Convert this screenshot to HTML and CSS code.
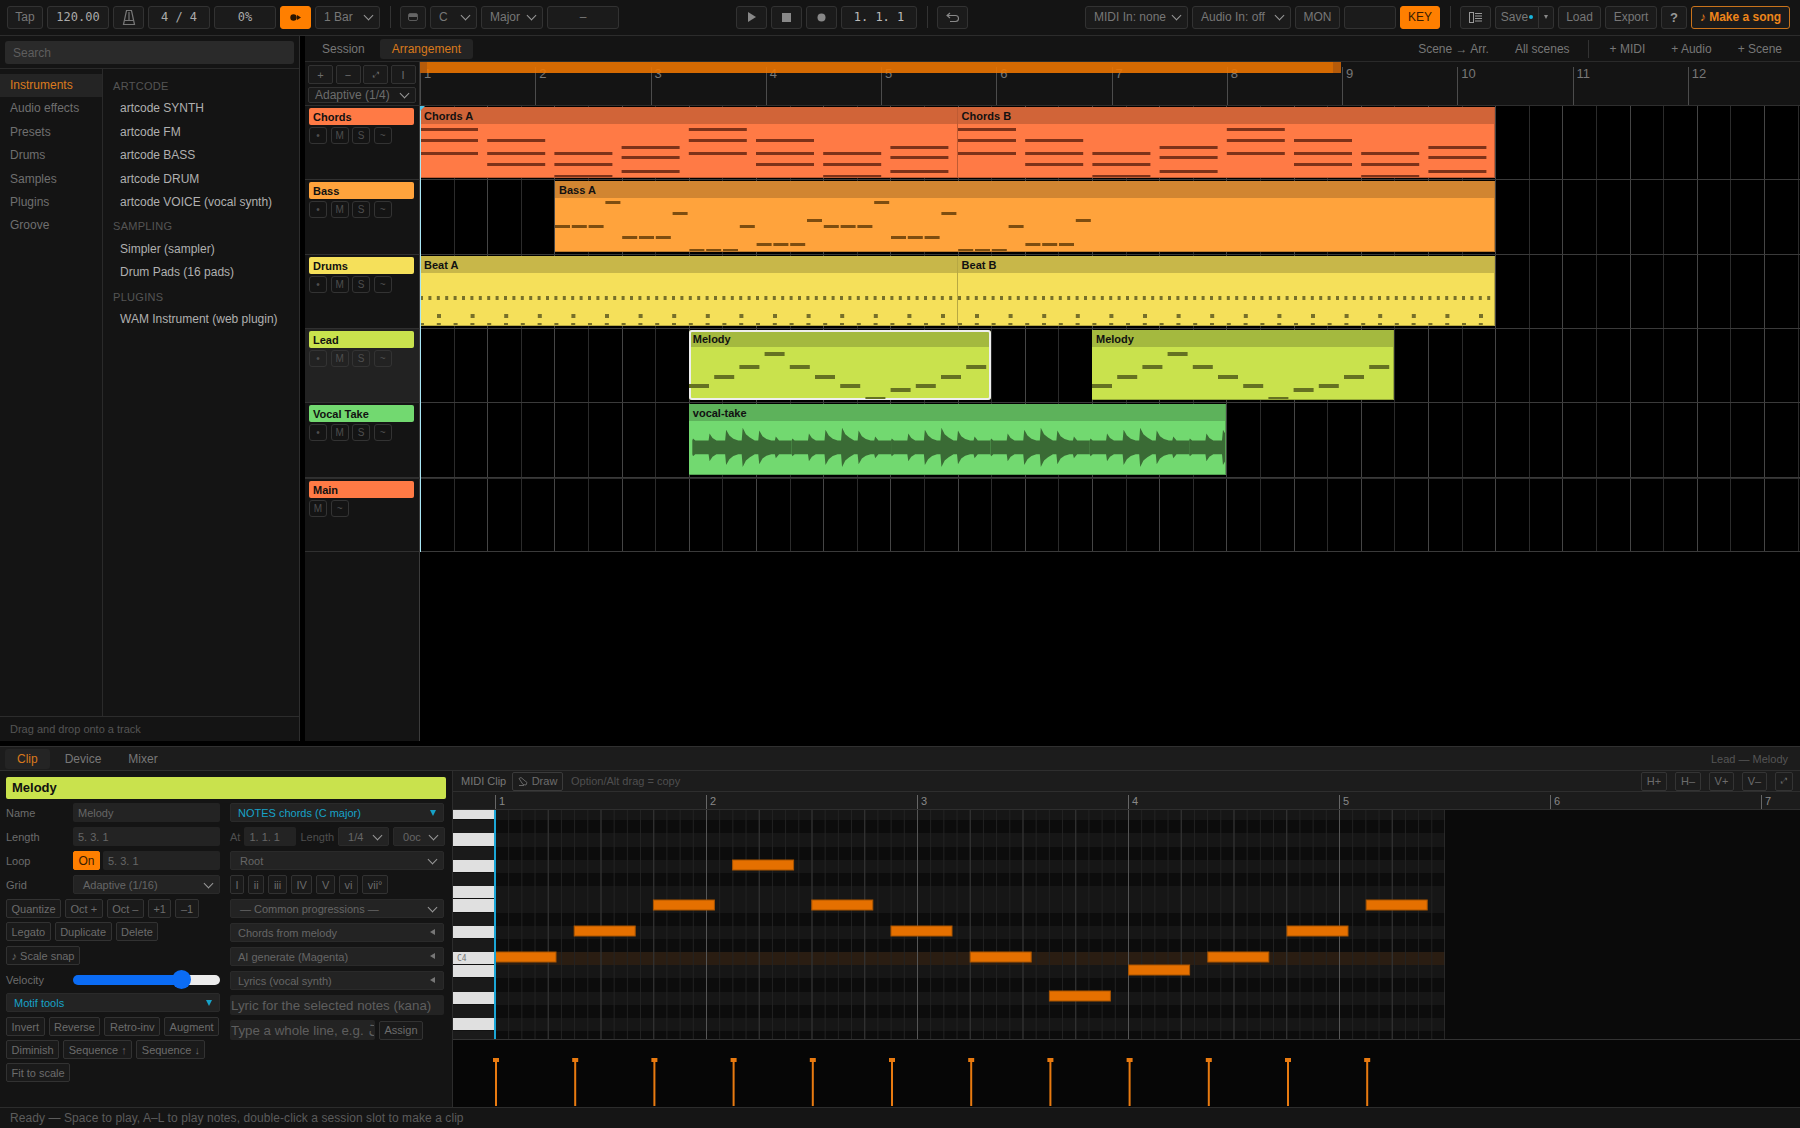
FILE: index.html
```html
<!DOCTYPE html>
<html lang="en">
<head>
    <meta charset="UTF-8">
    <title>artcode DAW</title>
    <link rel="stylesheet" href="styles.css">
</head>
<body>
    <!-- shared note shapes for clips -->
    <svg class="defs" aria-hidden="true">
        <defs>
            <g id="chords-half">
                <rect x="0" y="21" width="58" height="3"/><rect x="0" y="32" width="58" height="3"/><rect x="0" y="45" width="58" height="3"/>
                <rect x="67.2" y="32" width="58" height="3"/><rect x="67.2" y="45" width="58" height="3"/><rect x="67.2" y="56" width="58" height="3"/>
                <rect x="134.4" y="45" width="58" height="3"/><rect x="134.4" y="56" width="58" height="3"/><rect x="134.4" y="68" width="58" height="3"/>
                <rect x="201.6" y="39" width="58" height="3"/><rect x="201.6" y="49" width="58" height="3"/><rect x="201.6" y="63" width="58" height="3"/>
            </g>
            <g id="chords-clip"><use href="#chords-half"/><use href="#chords-half" x="268.8"/></g>
            <g id="bass-half">
                <rect x="0" y="44" width="15" height="3"/><rect x="16.8" y="44" width="15" height="3"/><rect x="33.6" y="44" width="15" height="3"/>
                <rect x="50.4" y="20" width="15" height="3"/>
                <rect x="67.2" y="55" width="15" height="3"/><rect x="84" y="55" width="15" height="3"/><rect x="100.8" y="55" width="15" height="3"/>
                <rect x="117.6" y="31" width="15" height="3"/>
                <rect x="134.4" y="68" width="15" height="3"/><rect x="151.2" y="68" width="15" height="3"/><rect x="168" y="68" width="15" height="3"/>
                <rect x="184.8" y="44" width="15" height="3"/>
                <rect x="201.6" y="62" width="15" height="3"/><rect x="218.4" y="62" width="15" height="3"/><rect x="235.2" y="62" width="15" height="3"/>
                <rect x="252" y="38" width="15" height="3"/>
            </g>
            <g id="melody-clip">
                <rect x="0" y="54" width="20" height="4"/><rect x="25.2" y="45" width="20" height="4"/><rect x="50.4" y="35" width="20" height="4"/>
                <rect x="75.6" y="22" width="20" height="4"/><rect x="100.8" y="35" width="20" height="4"/><rect x="126" y="45" width="20" height="4"/>
                <rect x="151.2" y="54" width="20" height="4"/><rect x="176.4" y="67" width="20" height="4"/><rect x="201.6" y="58" width="20" height="4"/>
                <rect x="226.8" y="54" width="20" height="4"/><rect x="252" y="45" width="20" height="4"/><rect x="277.2" y="35" width="20" height="4"/>
            </g>
            <g id="drum-bar">
                <rect x="0" y="40" width="3" height="4"/><rect x="8.4" y="40" width="3" height="4"/><rect x="16.8" y="40" width="3" height="4"/><rect x="25.2" y="40" width="3" height="4"/>
                <rect x="33.6" y="40" width="3" height="4"/><rect x="42" y="40" width="3" height="4"/><rect x="50.4" y="40" width="3" height="4"/><rect x="58.8" y="40" width="3" height="4"/>
                <rect x="17" y="58" width="4" height="4"/><rect x="50.6" y="58" width="4" height="4"/>
                <rect x="0" y="67" width="4" height="4"/><rect x="16.8" y="67" width="4" height="4"/><rect x="33.6" y="67" width="4" height="4"/><rect x="50.4" y="67" width="4" height="4"/>
            </g>
            <g id="drum-clip">
                <use href="#drum-bar"/><use href="#drum-bar" x="67.2"/><use href="#drum-bar" x="134.4"/><use href="#drum-bar" x="201.6"/>
                <use href="#drum-bar" x="268.8"/><use href="#drum-bar" x="336"/><use href="#drum-bar" x="403.2"/><use href="#drum-bar" x="470.4"/>
            </g>
            <path id="wave-period" d="M0,37 L0.7,35 L3,37 L16.5,37 L17.5,30 L20.5,34.5 L24.5,37 L33.3,37 L34.3,26 L37.6,32 L41.6,35.2 L46.6,37 L50.1,37 L51.1,24 L54.4,30.6 L58.4,34 L63.4,37 L66.9,37 L67.9,27 L71.2,32.6 L75.2,35.6 L80.2,37 L83.7,37 L84.7,33 L88,37 L100.8,37 L100.8,51 L88,51 L84.7,55 L83.7,51 L80.2,51 L75.2,52.4 L71.2,55.4 L67.9,61 L66.9,51 L63.4,51 L58.4,54 L54.4,57.4 L51.1,64 L50.1,51 L46.6,51 L41.6,52.8 L37.6,56 L34.3,62 L33.3,51 L24.5,51 L20.5,53.5 L17.5,58 L16.5,51 L3,51 L0.7,53 L0,51 Z"/>
            <g id="vel-stem"><rect x="0" y="18" width="6" height="4"/><rect x="2" y="18" width="2" height="48"/></g>
        </defs>
    </svg>

    <header class="topbar">
        <div class="btn w-tap">Tap</div>
        <div class="btn mono w-num">120.00</div>
        <div class="btn w-icon">
            <svg width="14" height="17" viewBox="0 0 14 17" fill="none" stroke="#777" stroke-width="1.2"><path d="M4.5 1.5h5l3 14h-11z"/><path d="M2.5 11.5h9M7 11.5V3"/></svg>
        </div>
        <div class="btn mono w-num">4 / 4</div>
        <div class="btn mono w-num">0%</div>
        <div class="btn btn-on w-icon">
            <svg width="11" height="7" viewBox="0 0 11 7" fill="#2a1500"><circle cx="3.5" cy="3.5" r="3.2"/><path d="M7 1L11 3.5 7 6z"/></svg>
        </div>
        <div class="btn sel w-bar">1 Bar</div>
        <div class="sep"></div>
        <div class="btn w-keys">
            <svg width="10" height="8" viewBox="0 0 10 8"><rect x="0.5" y="0.5" width="9" height="7" rx="1.5" fill="none" stroke="#5a5a5a"/><rect x="1" y="1" width="8" height="3" fill="#666"/></svg>
        </div>
        <div class="btn sel w-root">C</div>
        <div class="btn sel w-num">Major</div>
        <div class="btn w-chord">–</div>

        <div class="btn w-icon push">
            <svg width="10" height="12" viewBox="0 0 10 12" fill="#888"><path d="M1 1l8 5-8 5z"/></svg>
        </div>
        <div class="btn w-icon">
            <svg width="9" height="9" viewBox="0 0 9 9" fill="#888"><rect width="9" height="9"/></svg>
        </div>
        <div class="btn w-icon">
            <svg width="9" height="9" viewBox="0 0 9 9" fill="#888"><circle cx="4.5" cy="4.5" r="4"/></svg>
        </div>
        <div class="btn mono bright w-pos">1. 1. 1</div>
        <div class="sep"></div>
        <div class="btn w-icon">
            <svg width="14" height="11" viewBox="0 0 14 11" fill="none" stroke="#888" stroke-width="1.1"><path d="M4 1L1 3.5 4 6M1 3.5h8.5a3 3 0 0 1 0 6H4"/></svg>
        </div>

        <div class="btn sel w-midi push">MIDI In: none</div>
        <div class="btn sel w-audio">Audio In: off</div>
        <div class="btn w-mon">MON</div>
        <div class="btn w-blank"></div>
        <div class="btn btn-on w-key">KEY</div>
        <div class="sep"></div>
        <div class="btn w-icon">
            <svg width="13" height="11" viewBox="0 0 13 11" fill="none" stroke="#999"><rect x="0.5" y="0.5" width="4" height="10"/><path d="M6 1.5h7M6 4h7M6 6.5h7M6 9h7"/></svg>
        </div>
        <div class="split">
            <div class="btn w-save">Save<span class="dirty"></span></div>
            <div class="btn w-caret"><span class="tri-down"></span></div>
        </div>
        <div class="btn w-load">Load</div>
        <div class="btn w-export">Export</div>
        <div class="btn w-help">?</div>
        <div class="btn btn-song w-song">♪ Make a song</div>
    </header>

    <main class="workspace">
        <aside class="browser">
            <div class="browser-search"><input class="search" placeholder="Search"></div>
            <div class="browser-body">
                <nav class="cats">
                    <div class="cat active">Instruments</div>
                    <div class="cat">Audio effects</div>
                    <div class="cat">Presets</div>
                    <div class="cat">Drums</div>
                    <div class="cat">Samples</div>
                    <div class="cat">Plugins</div>
                    <div class="cat">Groove</div>
                </nav>
                <div class="items">
                    <div class="group">ARTCODE</div>
                    <div class="item">artcode SYNTH</div>
                    <div class="item">artcode FM</div>
                    <div class="item">artcode BASS</div>
                    <div class="item">artcode DRUM</div>
                    <div class="item">artcode VOICE (vocal synth)</div>
                    <div class="group">SAMPLING</div>
                    <div class="item">Simpler (sampler)</div>
                    <div class="item">Drum Pads (16 pads)</div>
                    <div class="group">PLUGINS</div>
                    <div class="item">WAM Instrument (web plugin)</div>
                </div>
            </div>
            <div class="browser-foot">Drag and drop onto a track</div>
        </aside>

        <section class="arrange">
            <div class="arrange-tabs">
                <div class="tab">Session</div>
                <div class="tab active">Arrangement</div>
                <div class="arrange-actions">
                    <div class="action">Scene → Arr.</div>
                    <div class="action">All scenes</div>
                    <div class="action-sep"></div>
                    <div class="action">+ MIDI</div>
                    <div class="action">+ Audio</div>
                    <div class="action">+ Scene</div>
                </div>
            </div>

            <div class="ruler-row">
                <div class="ruler-tools">
                    <div class="zoom-btns">
                        <div class="tool wide">+</div>
                        <div class="tool wide">−</div>
                        <div class="tool wide small">⤢</div>
                        <div class="tool wide">I</div>
                    </div>
                    <div class="tool sel snap-sel">Adaptive (1/4)</div>
                </div>
                <div class="ruler">
                    <div class="bar">1</div><div class="bar">2</div><div class="bar">3</div><div class="bar">4</div>
                    <div class="bar">5</div><div class="bar">6</div><div class="bar">7</div><div class="bar">8</div>
                    <div class="bar">9</div><div class="bar">10</div><div class="bar">11</div><div class="bar">12</div>
                    <div class="loop"></div>
                </div>
            </div>

            <div class="tracks">
                <div class="track">
                    <div class="head">
                        <div class="track-name c-chords">Chords</div>
                        <div class="track-btns"><div class="mini">•</div><div class="mini">M</div><div class="mini">S</div><div class="mini">~</div></div>
                    </div>
                    <div class="lane">
                        <div class="clip c-chords chords-a"><div class="clip-name">Chords A</div><svg class="clip-notes n-chords"><use href="#chords-clip"/></svg></div>
                        <div class="clip c-chords chords-b"><div class="clip-name">Chords B</div><svg class="clip-notes n-chords"><use href="#chords-clip"/></svg></div>
                    </div>
                </div>
                <div class="track">
                    <div class="head">
                        <div class="track-name c-bass">Bass</div>
                        <div class="track-btns"><div class="mini">•</div><div class="mini">M</div><div class="mini">S</div><div class="mini">~</div></div>
                    </div>
                    <div class="lane">
                        <div class="clip c-bass bass-a"><div class="clip-name">Bass A</div><svg class="clip-notes n-bass"><use href="#bass-half"/><use href="#bass-half" x="268.8"/></svg></div>
                    </div>
                </div>
                <div class="track">
                    <div class="head">
                        <div class="track-name c-drums">Drums</div>
                        <div class="track-btns"><div class="mini">•</div><div class="mini">M</div><div class="mini">S</div><div class="mini">~</div></div>
                    </div>
                    <div class="lane">
                        <div class="clip c-drums chords-a"><div class="clip-name">Beat A</div><svg class="clip-notes n-drums"><use href="#drum-clip"/></svg></div>
                        <div class="clip c-drums chords-b"><div class="clip-name">Beat B</div><svg class="clip-notes n-drums"><use href="#drum-clip"/></svg></div>
                    </div>
                </div>
                <div class="track selected">
                    <div class="head">
                        <div class="track-name c-lead">Lead</div>
                        <div class="track-btns"><div class="mini">•</div><div class="mini">M</div><div class="mini">S</div><div class="mini">~</div></div>
                    </div>
                    <div class="lane">
                        <div class="clip c-lead melody-a picked"><div class="clip-name">Melody</div><svg class="clip-notes n-lead"><use href="#melody-clip"/></svg></div>
                        <div class="clip c-lead melody-b"><div class="clip-name">Melody</div><svg class="clip-notes n-lead"><use href="#melody-clip"/></svg></div>
                    </div>
                </div>
                <div class="track">
                    <div class="head">
                        <div class="track-name c-vocal">Vocal Take</div>
                        <div class="track-btns"><div class="mini">•</div><div class="mini">M</div><div class="mini">S</div><div class="mini">~</div></div>
                    </div>
                    <div class="lane">
                        <div class="clip c-vocal vocal"><div class="clip-name">vocal-take</div>
                            <svg class="clip-notes" viewBox="0 0 537.6 70.5">
                                <g fill="#3a6b35">
                                    <use href="#wave-period"/><use href="#wave-period" x="100.8"/><use href="#wave-period" x="201.6"/>
                                    <use href="#wave-period" x="302.4"/><use href="#wave-period" x="403.2"/><use href="#wave-period" x="504"/>
                                </g>
                            </svg>
                        </div>
                    </div>
                </div>
                <div class="track track-main">
                    <div class="head">
                        <div class="track-name c-chords">Main</div>
                        <div class="track-btns"><div class="mini">M</div><div class="mini">~</div></div>
                    </div>
                    <div class="lane"></div>
                </div>
                <div class="track-rest"><div class="head"></div></div>
                <div class="playhead"></div>
            </div>
        </section>
    </main>

    <section class="detail">
        <div class="detail-tabs">
            <div class="tab active">Clip</div>
            <div class="tab">Device</div>
            <div class="tab">Mixer</div>
            <div class="detail-title">Lead — Melody</div>
        </div>
        <div class="detail-body">
            <div class="clip-panel">
                <div class="clip-title">Melody</div>
                <div class="clip-cols">
                    <div class="col">
                        <div class="field"><label>Name</label><input class="txt" value="Melody"></div>
                        <div class="field"><label>Length</label><input class="txt" value="5. 3. 1"></div>
                        <div class="field"><label>Loop</label><div class="tool tool-on">On</div><input class="txt" value="5. 3. 1"></div>
                        <div class="field"><label>Grid</label><div class="drop sel indent">Adaptive (1/16)</div></div>
                        <div class="tools">
                            <div class="tool-row"><div class="tool">Quantize</div><div class="tool">Oct +</div><div class="tool">Oct –</div><div class="tool">+1</div><div class="tool">–1</div></div>
                            <div class="tool-row"><div class="tool">Legato</div><div class="tool">Duplicate</div><div class="tool">Delete</div></div>
                        </div>
                        <div class="tool-row"><div class="tool">♪ Scale snap</div></div>
                        <div class="field vel-field"><label>Velocity</label><input class="velocity" type="range" min="0" max="100" value="77"></div>
                        <div class="drop fold-open">Motif tools</div>
                        <div class="tools">
                            <div class="tool-row"><div class="tool">Invert</div><div class="tool">Reverse</div><div class="tool">Retro-inv</div><div class="tool">Augment</div></div>
                            <div class="tool-row"><div class="tool">Diminish</div><div class="tool">Sequence ↑</div><div class="tool">Sequence ↓</div></div>
                            <div class="tool-row"><div class="tool">Fit to scale</div></div>
                        </div>
                    </div>
                    <div class="col">
                        <div class="drop fold-open">NOTES chords (C major)</div>
                        <div class="at-row">
                            <span class="at-label">At</span><input class="txt at-pos" value="1. 1. 1">
                            <span class="at-label">Length</span><div class="drop sel at-len">1/4</div><div class="drop sel at-oct">0oc</div>
                        </div>
                        <div class="drop sel indent-root">Root</div>
                        <div class="tool-row numerals"><div class="tool">I</div><div class="tool">ii</div><div class="tool">iii</div><div class="tool">IV</div><div class="tool">V</div><div class="tool">vi</div><div class="tool">vii°</div></div>
                        <div class="drop sel indent">— Common progressions —</div>
                        <div class="drop fold">Chords from melody</div>
                        <div class="drop fold">AI generate (Magenta)</div>
                        <div class="drop fold">Lyrics (vocal synth)</div>
                        <input class="lyric" placeholder="Lyric for the selected notes (kana)">
                        <div class="assign-row"><input class="lyric line" placeholder="Type a whole line, e.g. こんにちは"><div class="tool">Assign</div></div>
                    </div>
                </div>
            </div>

            <div class="roll">
                <div class="roll-head">
                    <span class="roll-title">MIDI Clip</span>
                    <div class="tool draw">
                        <svg width="10" height="9" viewBox="0 0 10 9" fill="none" stroke="#666"><path d="M1 1.5l2-1 6 5-1 2.5-3-.5zM1 8.5h5"/></svg>
                        Draw
                    </div>
                    <span class="roll-hint">Option/Alt drag = copy</span>
                    <div class="roll-zoom">
                        <div class="tool zoom-h">H+</div><div class="tool zoom-h">H–</div><div class="tool zoom-v">V+</div><div class="tool zoom-v">V–</div><div class="tool zoom-fit small">⤢</div>
                    </div>
                </div>
                <div class="roll-ruler">
                    <div class="roll-bar">1</div><div class="roll-bar">2</div><div class="roll-bar">3</div><div class="roll-bar">4</div>
                    <div class="roll-bar">5</div><div class="roll-bar">6</div><div class="roll-bar">7</div>
                </div>
                <div class="roll-grid">
                    <div class="rows">
                        <div class="row"><div class="key white"></div><div class="keyrow light"></div></div>
                        <div class="row"><div class="key black"></div><div class="keyrow"></div></div>
                        <div class="row"><div class="key white"></div><div class="keyrow light"></div></div>
                        <div class="row"><div class="key black"></div><div class="keyrow"></div></div>
                        <div class="row"><div class="key white"></div><div class="keyrow light"></div></div>
                        <div class="row"><div class="key black"></div><div class="keyrow"></div></div>
                        <div class="row"><div class="key white"></div><div class="keyrow light"></div></div>
                        <div class="row"><div class="key white"></div><div class="keyrow light"></div></div>
                        <div class="row"><div class="key black"></div><div class="keyrow"></div></div>
                        <div class="row"><div class="key white"></div><div class="keyrow light"></div></div>
                        <div class="row"><div class="key black"></div><div class="keyrow"></div></div>
                        <div class="row"><div class="key white">C4</div><div class="keyrow root"></div></div>
                        <div class="row"><div class="key white"></div><div class="keyrow light"></div></div>
                        <div class="row"><div class="key black"></div><div class="keyrow"></div></div>
                        <div class="row"><div class="key white"></div><div class="keyrow light"></div></div>
                        <div class="row"><div class="key black"></div><div class="keyrow"></div></div>
                        <div class="row"><div class="key white"></div><div class="keyrow light"></div></div>
                        <div class="row"><div class="key black"></div><div class="keyrow"></div></div>
                    </div>
                    <div class="roll-lines"></div>
                    <svg class="roll-notes">
                        <rect x="0" y="142" width="61" height="10"/><rect x="79.2" y="116" width="61" height="10"/><rect x="158.4" y="90" width="61" height="10"/>
                        <rect x="237.6" y="50" width="61" height="10"/><rect x="316.8" y="90" width="61" height="10"/><rect x="396" y="116" width="61" height="10"/>
                        <rect x="475.2" y="142" width="61" height="10"/><rect x="554.4" y="181" width="61" height="10"/><rect x="633.6" y="155" width="61" height="10"/>
                        <rect x="712.8" y="142" width="61" height="10"/><rect x="792" y="116" width="61" height="10"/><rect x="871.2" y="90" width="61" height="10"/>
                    </svg>
                    <div class="roll-playhead"></div>
                </div>
                <div class="vel-lane">
                    <svg class="vel-stems">
                        <use href="#vel-stem" x="40"/><use href="#vel-stem" x="119.2"/><use href="#vel-stem" x="198.4"/><use href="#vel-stem" x="277.6"/>
                        <use href="#vel-stem" x="356.8"/><use href="#vel-stem" x="436"/><use href="#vel-stem" x="515.2"/><use href="#vel-stem" x="594.4"/>
                        <use href="#vel-stem" x="673.6"/><use href="#vel-stem" x="752.8"/><use href="#vel-stem" x="832"/><use href="#vel-stem" x="911.2"/>
                    </svg>
                </div>
            </div>
        </div>
    </section>

    <footer class="status">Ready — Space to play, A–L to play notes, double-click a session slot to make a clip</footer>
</body>
</html>
```

FILE: styles.css
```css
* {
    box-sizing: border-box;
}

html, body {
    margin: 0;
    height: 100%;
}

body {
    width: 1800px;
    height: 1128px;
    display: flex;
    flex-direction: column;
    overflow: hidden;
    background-color: #000;
    color: #777;
    font-family: "Liberation Sans", "Noto Sans CJK JP", sans-serif;
    font-size: 12px;
}

input {
    font-family: inherit;
    outline: none;
    border: none;
}

.defs {
    position: absolute;
    width: 0;
    height: 0;
}

/* top bar */
.topbar {
    flex: none;
    height: 36px;
    display: flex;
    align-items: center;
    gap: 4px;
    padding: 0 0 1px 7px;
    background-color: #141414;
    border-bottom: 1px solid #2c2c2c;
}

.btn {
    flex: none;
    height: 23px;
    display: flex;
    align-items: center;
    justify-content: center;
    background-color: #1b1b1b;
    border: 1px solid #323232;
    border-radius: 3px;
    color: #777;
    white-space: nowrap;
}

.mono {
    font-family: "DejaVu Sans Mono", monospace;
    font-size: 12px;
    color: #aaa;
}

.bright {
    color: #bbb;
}

.btn-on {
    background-color: #ff7f00;
    border-color: #ff7f00;
    color: #3a1c00;
}

.btn-song {
    background-color: #1b1b1b;
    border-color: #c9731c;
    color: #ee851a;
    font-weight: bold;
}

.sel {
    position: relative;
    justify-content: flex-start;
    padding-left: 8px;
}

.sel::after {
    content: "";
    position: absolute;
    right: 7px;
    top: 50%;
    width: 6px;
    height: 6px;
    margin-top: -5px;
    border-right: 1.2px solid #999;
    border-bottom: 1.2px solid #999;
    transform: rotate(45deg);
}

.w-tap { width: 36px; }
.w-num { width: 62px; }
.w-icon { width: 31px; }
.w-bar { width: 65px; }
.w-keys { width: 26px; }
.w-root { width: 47px; }
.w-chord { width: 72px; }
.w-pos { width: 76px; }
.w-midi { width: 103px; }
.w-audio { width: 99px; }
.w-mon { width: 45px; }
.w-blank { width: 52px; }
.w-key { width: 40px; }
.w-save { width: 43px; border-radius: 3px 0 0 3px; border-right: none; }
.w-caret { width: 16px; border-radius: 0 3px 3px 0; }
.w-load { width: 43px; }
.w-export { width: 52px; }
.w-help { width: 26px; font-weight: bold; font-size: 13px; color: #999; }
.w-song { width: 99px; }

.push {
    margin-left: 113px;
}

.sep {
    flex: none;
    width: 1px;
    height: 22px;
    margin: 0 5px 0 6px;
    background-color: #333;
}

.split {
    display: flex;
}

.dirty {
    width: 4px;
    height: 4px;
    margin-left: 1px;
    border-radius: 50%;
    background-color: #16b4dc;
}

.tri-down {
    border-left: 2.5px solid transparent;
    border-right: 2.5px solid transparent;
    border-top: 4px solid #888;
}

/* main area */
.workspace {
    flex: none;
    height: 705px;
    display: flex;
    gap: 5px;
}

.browser {
    flex: none;
    width: 300px;
    display: flex;
    flex-direction: column;
    background-color: #141414;
    border-right: 1px solid #2e2e2e;
}

.browser-search {
    flex: none;
    height: 33px;
    padding: 5px 5px 0;
    border-bottom: 1px solid #2a2a2a;
}

.search {
    width: 289px;
    height: 23px;
    padding: 0 8px;
    background-color: #2a2a2a;
    border-radius: 3px;
    font-size: 12px;
    color: #888;
}

.search::placeholder,
.lyric::placeholder {
    color: #5e5e5e;
}

.browser-body {
    flex: 1;
    display: flex;
    min-height: 0;
}

.cats {
    flex: none;
    width: 103px;
    padding-top: 5px;
    border-right: 1px solid #2a2a2a;
}

.cat {
    height: 23.4px;
    padding-left: 10px;
    line-height: 23.4px;
    color: #6f6f6f;
}

.cat.active {
    background-color: #242424;
    color: #dc7b1e;
}

.items {
    flex: 1;
    padding-top: 5px;
}

.group {
    height: 23.4px;
    padding-left: 10px;
    line-height: 24px;
    font-size: 11px;
    letter-spacing: 0.3px;
    color: #555;
}

.item {
    height: 23.4px;
    padding-left: 17px;
    line-height: 22px;
    color: #b0b0b0;
}

.browser-foot {
    flex: none;
    height: 25px;
    padding-left: 10px;
    line-height: 25px;
    font-size: 11px;
    color: #555;
    border-top: 1px solid #2c2c2c;
}

/* arrangement */
.arrange {
    flex: 1;
    min-width: 0;
    display: flex;
    flex-direction: column;
}

.arrange-tabs {
    flex: none;
    height: 26px;
    display: flex;
    align-items: center;
    gap: 3px;
    padding: 0 5px;
    background-color: #141414;
    border-bottom: 1px solid #2a2a2a;
}

.tab {
    height: 20px;
    padding: 0 12px;
    line-height: 20px;
    border-radius: 3px;
    color: #777;
}

.tab.active {
    background-color: #242424;
    color: #d9791c;
}

.arrange-actions {
    margin-left: auto;
    display: flex;
    align-items: center;
}

.action {
    padding: 0 13px;
    white-space: nowrap;
    color: #777;
}

.action-sep {
    width: 1px;
    height: 18px;
    margin: 0 8px 0 5px;
    background-color: #333;
}

.ruler-row {
    flex: none;
    height: 44px;
    display: flex;
    background-color: #141414;
    border-bottom: 1px solid #2e2e2e;
}

.ruler-tools {
    flex: none;
    width: 115px;
    padding: 3px 3px 0;
    border-right: 1px solid #333;
}

.zoom-btns {
    display: flex;
    gap: 2.5px;
    margin-bottom: 3px;
}

.tool {
    flex: none;
    height: 19px;
    padding: 0 4.5px;
    display: flex;
    align-items: center;
    justify-content: center;
    gap: 4px;
    background-color: #1a1a1a;
    border: 1px solid #323232;
    border-radius: 2px;
    font-size: 11px;
    color: #6c6c6c;
    white-space: nowrap;
}

.tool.wide {
    width: 25px;
}

.small {
    font-size: 8px;
}

.tool-on {
    width: 27px;
    padding: 0;
    background-color: #ff7f00;
    border-color: #ff7f00;
    font-size: 12px;
    color: #3a1c00;
}

.snap-sel {
    width: 108px;
    height: 16px;
    justify-content: flex-start;
    padding-left: 6px;
    font-size: 12px;
}

.ruler {
    flex: 1;
    position: relative;
    display: flex;
    overflow: hidden;
}

.bar {
    flex: none;
    width: 115.25px;
    margin-top: 5px;
    padding-left: 3px;
    border-left: 1px solid #4c4c4c;
    line-height: 13px;
    font-size: 13px;
    color: #777;
}

.loop {
    position: absolute;
    left: 0;
    top: 0;
    width: 921px;
    height: 11px;
    background-color: rgba(240, 118, 0, 0.88);
    border-left: 7px solid #b65b0a;
    border-right: 8px solid #b65b0a;
}

.tracks {
    flex: 1;
    position: relative;
    display: flex;
    flex-direction: column;
    min-height: 0;
}

.track {
    flex: none;
    height: 74.33px;
    display: flex;
}

.head {
    flex: none;
    width: 115px;
    padding: 2px 0 0 4px;
    background-color: #141414;
    border-right: 1px solid #3c3c3c;
    border-bottom: 1px solid #303030;
}

.selected .head {
    background-color: #222;
}

.track-name {
    width: 105px;
    height: 17px;
    padding-left: 4px;
    line-height: 18px;
    border-radius: 2px;
    font-size: 11px;
    font-weight: bold;
    color: #111;
}

.track-btns {
    display: flex;
    gap: 3.6px;
    margin-top: 2px;
}

.mini {
    width: 18px;
    height: 17px;
    text-align: center;
    line-height: 15px;
    border: 1px solid #333;
    border-radius: 3px;
    font-size: 10px;
    color: #4e4e4e;
}

.lane {
    flex: 1;
    position: relative;
    border-bottom: 1px solid #3a3a3a;
    background-image: repeating-linear-gradient(90deg, #454545 0 1px, transparent 1px 33.6px, #2b2b2b 33.6px 34.6px, transparent 34.6px 67.2px);
}

.track-main {
    border-top: 1px solid #2e2e2e;
}

.track-rest {
    flex: 1;
    display: flex;
}

.track-rest .head {
    border-bottom: none;
}

.playhead {
    position: absolute;
    left: 115px;
    top: 0;
    width: 1px;
    height: 446px;
    background-color: #a8e6f5;
}

.playhead::before {
    content: "";
    position: absolute;
    left: 0;
    top: 0;
    border-top: 5px solid #4cc4ea;
    border-right: 5px solid transparent;
}

.clip {
    position: absolute;
    top: 1px;
    height: 70.5px;
    overflow: hidden;
    border-right: 1px solid rgba(0, 0, 0, 0.25);
    border-bottom: 1px solid rgba(0, 0, 0, 0.25);
}

.clip-name {
    height: 17px;
    padding-left: 4px;
    line-height: 18px;
    font-size: 11px;
    font-weight: bold;
    color: #111;
    background-color: rgba(0, 0, 0, 0.18);
}

.clip-notes {
    position: absolute;
    left: 0;
    top: 0;
    width: 100%;
    height: 100%;
}

.c-chords { background-color: #ff7a45; }
.c-bass { background-color: #ffa33c; }
.c-drums { background-color: #f5e05a; }
.c-lead { background-color: #c9e24d; }
.c-vocal { background-color: #72d970; }

.n-chords { fill: #7d3219; }
.n-bass { fill: #7d4d10; }
.n-drums { fill: #77702a; }
.n-lead { fill: #657122; }

.chords-a { left: 0; width: 537.6px; }
.chords-b { left: 537.6px; width: 537.6px; }
.bass-a { left: 135px; width: 940.2px; }
.melody-a { left: 268.8px; width: 302.4px; }
.melody-b { left: 672px; width: 302.4px; }
.vocal { left: 268.8px; width: 537.6px; }

.picked {
    border-radius: 3px;
    outline: 2px solid #eee;
    outline-offset: -2px;
}

/* lower panel */
.detail {
    flex: none;
    height: 361px;
    margin-top: 5px;
    display: flex;
    flex-direction: column;
    background-color: #141414;
    border-top: 1px solid #303030;
}

.detail-tabs {
    flex: none;
    height: 24px;
    display: flex;
    align-items: center;
    gap: 3px;
    padding: 0 5px;
    background-color: #1c1c1c;
    border-bottom: 1px solid #2e2e2e;
}

.detail-title {
    margin-left: auto;
    padding-right: 7px;
    font-size: 11px;
    color: #555;
}

.detail-body {
    flex: 1;
    display: flex;
    min-height: 0;
}

.clip-panel {
    flex: none;
    width: 453px;
    padding: 6px;
    border-right: 1px solid #2c2c2c;
}

.clip-title {
    width: 440px;
    height: 22px;
    padding-left: 6px;
    line-height: 22px;
    border-radius: 2px;
    background-color: #c9e24d;
    font-size: 13px;
    font-weight: bold;
    color: #111;
}

.clip-cols {
    display: flex;
    gap: 10px;
    margin-top: 4px;
}

.col {
    flex: none;
    width: 214px;
    display: flex;
    flex-direction: column;
    gap: 5px;
}

.field {
    display: flex;
    align-items: center;
    gap: 3px;
    height: 19px;
}

.vel-field {
    margin-bottom: -1px;
}

.field label {
    flex: none;
    width: 64px;
    font-size: 11px;
    color: #6c6c6c;
}

.txt {
    flex: 1;
    min-width: 0;
    height: 19px;
    padding: 0 5px;
    background-color: #232323;
    border-radius: 2px;
    font-size: 11px;
    color: #666;
}

.drop {
    flex: 1;
    height: 19px;
    min-height: 19px;
    display: flex;
    align-items: center;
    padding-left: 7px;
    position: relative;
    background-color: #232323;
    border: 1px solid #2a2a2a;
    border-radius: 2px;
    font-size: 11px;
    color: #666;
    white-space: nowrap;
}

.indent {
    padding-left: 9px;
}

.indent-root {
    padding-left: 9px;
}

.col > .drop {
    flex: none;
}

.fold-open {
    color: #17a2c8;
}

.fold-open::after {
    content: "";
    position: absolute;
    right: 7px;
    top: 6px;
    border-left: 3px solid transparent;
    border-right: 3px solid transparent;
    border-top: 6px solid #17a2c8;
}

.fold::after {
    content: "";
    position: absolute;
    right: 8px;
    top: 5px;
    border-top: 3.5px solid transparent;
    border-bottom: 3.5px solid transparent;
    border-right: 5px solid #777;
}

.tools {
    display: flex;
    flex-direction: column;
    gap: 4px;
}

.tool-row {
    display: flex;
    gap: 4px;
}

.numerals .tool {
    padding: 0 4.6px;
}

.velocity {
    -webkit-appearance: none;
    appearance: none;
    flex: 1;
    min-width: 0;
    height: 10px;
    margin: 0;
    border-radius: 5px;
    background: linear-gradient(90deg, #0b6cf5 0 73%, #ececec 73%);
}

.velocity::-webkit-slider-thumb {
    -webkit-appearance: none;
    width: 19px;
    height: 19px;
    border-radius: 50%;
    background-color: #0b6cf5;
}

.at-row {
    height: 19px;
    display: flex;
    align-items: center;
    gap: 4px;
}

.at-label {
    flex: none;
    font-size: 11px;
    color: #4e4e4e;
}

.at-pos {
    flex: none;
    width: 52px;
}

.at-len {
    flex: none;
    width: 51px;
    padding-left: 9px;
}

.at-oct {
    flex: none;
    width: 52px;
    padding-left: 9px;
}

.lyric {
    width: 214px;
    height: 20px;
    padding: 0 1px;
    background-color: #232323;
    border-radius: 2px;
    font-size: 13.33px;
    color: #888;
}

.assign-row {
    display: flex;
    align-items: center;
    gap: 4px;
}

.lyric.line {
    width: 145px;
}

/* piano roll */
.roll {
    flex: 1;
    min-width: 0;
    min-height: 0;
    display: flex;
    flex-direction: column;
}

.roll-head {
    flex: none;
    height: 21px;
    display: flex;
    align-items: center;
    padding-left: 8px;
    background-color: #1c1c1c;
    border-bottom: 1px solid #2e2e2e;
}

.roll-title {
    width: 51px;
    font-size: 11px;
    color: #777;
}

.draw {
    width: 51px;
    padding: 0;
    background-color: #1c1c1c;
    border-color: #3a3a3a;
}

.roll-hint {
    margin-left: 8px;
    font-size: 11px;
    color: #4f4f4f;
}

.roll-zoom {
    margin-left: auto;
    padding-right: 7px;
    display: flex;
    gap: 8px;
}

.roll-zoom .tool {
    background-color: #1c1c1c;
    border-color: #343434;
}

.zoom-h { width: 26px; }
.zoom-v { width: 25px; }
.zoom-fit { width: 18px; }

.roll-ruler {
    flex: none;
    height: 18px;
    display: flex;
    padding-left: 42px;
    overflow: hidden;
    background-color: #1c1c1c;
    border-bottom: 1px solid #2e2e2e;
}

.roll-bar {
    flex: none;
    width: 211px;
    height: 14px;
    margin-top: 3px;
    padding-left: 3px;
    line-height: 12px;
    border-left: 1px solid #666;
    font-size: 11px;
    color: #888;
}

.roll-grid {
    flex: none;
    height: 229px;
    position: relative;
    overflow: hidden;
    background-color: #0a0a0a;
}

.rows {
    margin-top: -3px;
}

.row {
    height: 13.2px;
    display: flex;
}

.key {
    flex: none;
    width: 42px;
    padding-left: 4px;
    line-height: 13px;
    font-family: "DejaVu Sans Mono", monospace;
    font-size: 8px;
    color: #777;
}

.key.white {
    background-color: #e0e0e0;
    border-bottom: 1px solid #111;
}

.key.black {
    background-color: #1a1a1a;
}

.keyrow {
    flex: none;
    width: 949.5px;
    background-color: #0c0c0c;
}

.keyrow.light {
    background-color: #161616;
}

.keyrow.root {
    background-color: #2a1d12;
}

.roll-lines {
    position: absolute;
    left: 42px;
    top: 0;
    bottom: 0;
    width: 949.5px;
    background-image:
        linear-gradient(90deg, #555 1px, transparent 1px),
        linear-gradient(90deg, #353535 1px, transparent 1px),
        linear-gradient(90deg, #222 1px, transparent 1px);
    background-size: 211px 100%, 52.75px 100%, 13.19px 100%;
}

.roll-notes {
    position: absolute;
    left: 42px;
    top: 0;
    width: 949.5px;
    height: 229px;
    fill: #e57000;
    stroke: #a95400;
    stroke-width: 1;
}

.roll-playhead {
    position: absolute;
    left: 41px;
    top: 0;
    bottom: 0;
    width: 2px;
    background-color: #1ba6d6;
}

.vel-lane {
    flex: 1;
    min-height: 0;
    overflow: hidden;
    background-color: #060606;
    border-top: 1px solid #333;
}

.vel-stems {
    display: block;
    width: 100%;
    height: 66px;
    fill: #e87a10;
}

.status {
    flex: 1;
    padding-left: 10px;
    line-height: 20px;
    letter-spacing: 0.08px;
    background-color: #151515;
    border-top: 1px solid #2c2c2c;
    color: #5c5c5c;
}
```
